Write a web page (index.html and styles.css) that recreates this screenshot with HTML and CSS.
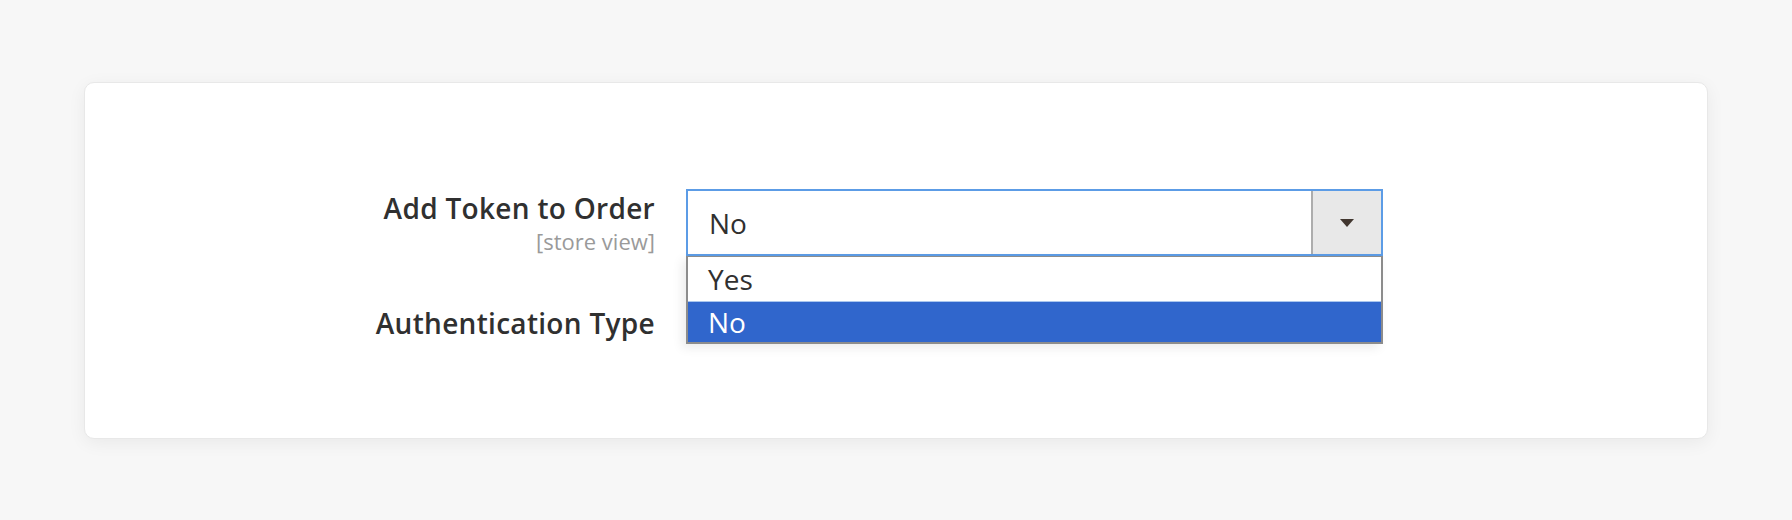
FILE: index.html
```html
<!DOCTYPE html>
<html lang="en">
<head>
<meta charset="utf-8">
<title>Config</title>
<link rel="stylesheet" href="styles.css">
</head>
<body>
<div class="page">
  <div class="card">
    <div class="row row-first">
      <div class="label">
        <span class="label-text">Add Token to Order</span>
        <span class="scope">[store view]</span>
      </div>
      <div class="control">
        <div class="select">
          <span class="select-value">No</span>
          <span class="select-btn"><span class="arrow"></span></span>
        </div>
        <ul class="dropdown">
          <li class="opt">Yes</li>
          <li class="opt opt-selected">No</li>
        </ul>
      </div>
    </div>
    <div class="row row-second">
      <div class="label">
        <span class="label-text">Authentication Type</span>
      </div>
      <div class="control"></div>
    </div>
  </div>
</div>
</body>
</html>
```

FILE: styles.css
```css
html, body {
  margin: 0;
  padding: 0;
}
body {
  background: #f7f7f7;
  font-family: "Open Sans", "Liberation Sans", sans-serif;
  color: #303030;
  width: 1792px;
  height: 520px;
  overflow: hidden;
}
.page {
  padding: 82px 0 0 84px;
}
.card {
  box-sizing: border-box;
  width: 1624px;
  height: 357px;
  background: #ffffff;
  border: 1px solid #e8e8e8;
  border-radius: 10px;
  box-shadow: 0 4px 18px rgba(0, 0, 0, 0.06);
  padding-top: 106px;
}
.row {
  display: grid;
  grid-template-columns: 570px 697px;
  column-gap: 31px;
  align-items: start;
}
.label {
  display: flex;
  flex-direction: column;
  align-items: flex-end;
  text-align: right;
}
.label-text {
  font-size: 28px;
  font-weight: 600;
  line-height: 32px;
  color: #303030;
  padding-top: 3px;
  letter-spacing: 0.3px;
}
.scope {
  font-size: 22px;
  line-height: 24px;
  color: #9a9a9a;
  margin-top: 5px;
}
.control {
  position: relative;
}
.select {
  box-sizing: border-box;
  height: 67px;
  border: 2px solid #5c9ce6;
  display: flex;
  align-items: stretch;
  background: #ffffff;
}
.select-value {
  flex: 1;
  display: flex;
  align-items: center;
  padding-left: 21px;
  font-size: 28px;
  color: #303030;
}
.select-btn {
  width: 68px;
  background: #e8e8e8;
  border-left: 2px solid #adadad;
  display: flex;
  align-items: center;
  justify-content: center;
}
.arrow {
  width: 0;
  height: 0;
  border-left: 7px solid transparent;
  border-right: 7px solid transparent;
  border-top: 8px solid #41362f;
}
.dropdown {
  position: absolute;
  left: 0;
  top: 67px;
  width: 697px;
  box-sizing: border-box;
  margin: 0;
  padding: 0;
  list-style: none;
  background: #ffffff;
  border: 2px solid #8c8c8c;
  border-top: 1px solid #8c8c8c;
  box-shadow: -4px 4px 10px rgba(0, 0, 0, 0.08);
  z-index: 2;
}
.opt {
  height: 44px;
  padding-left: 20px;
  display: flex;
  align-items: center;
  font-size: 28px;
  color: #303030;
}
.opt-selected {
  height: 40px;
  background: #3066cc;
  color: #ffffff;
  border-top: 1px solid #aac6ee;
}
.row-second {
  margin-top: 48px;
}
```
